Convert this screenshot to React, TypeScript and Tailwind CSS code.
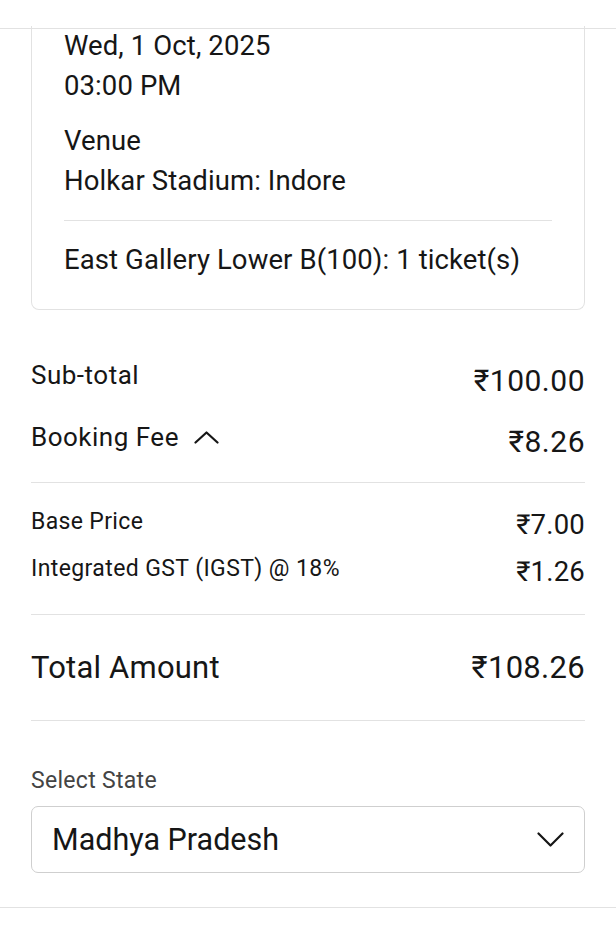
import React from "react";

function Row({ label, value, labelCls, valueCls, className }: { label: React.ReactNode; value: string; labelCls: string; valueCls: string; className?: string }) {
  return (
    <div className={"flex justify-between items-start " + (className ?? "")}>
      <div className={labelCls}>{label}</div>
      <div className={valueCls}>{value}</div>
    </div>
  );
}

export default function App() {
  return (
    <div className="w-[616px] h-[926px] bg-white overflow-hidden text-[#161616]" style={{ fontFamily: "Roboto, 'Noto Sans', sans-serif" }}>
      <div className="h-[29px] border-b border-[#e2e2e2]" />
      <div className="px-[31px]">
        <div className="border-x border-b border-[#e2e2e2] rounded-b-[8px] px-[32px] pb-[29px]">
          <div className="-mt-[3px] text-[27.5px] leading-[40px] tracking-[0.1px]">
            <p>Wed, 1 Oct, 2025</p>
            <p>03:00 PM</p>
            <p className="mt-[15px]">Venue</p>
            <p>Holkar Stadium: Indore</p>
          </div>
          <div className="mt-[19px] h-px bg-[#e2e2e2]" />
          <p className="mt-[19px] text-[27.5px] leading-[40px] tracking-[0.1px]">East Gallery Lower B(100): 1 ticket(s)</p>
        </div>

        <Row
          className="mt-[50px]"
          label="Sub-total"
          value="₹100.00"
          labelCls="text-[26px] leading-[30px] tracking-[0.5px]"
          valueCls="text-[30px] leading-[40px] pt-[1px] tracking-[0.5px]"
        />
        <Row
          className="mt-[21px]"
          label={
            <span className="flex items-center gap-[15px]">
              <span>Booking Fee</span>
              <svg width="25" height="13" viewBox="0 0 25 13" fill="none" stroke="#161616" strokeWidth="2.2" strokeLinecap="round" strokeLinejoin="round">
                <polyline points="1.5,11.5 12.5,1.5 23.5,11.5" />
              </svg>
            </span>
          }
          value="₹8.26"
          labelCls="text-[26px] leading-[30px] tracking-[0.5px]"
          valueCls="text-[30px] leading-[40px] tracking-[0.5px]"
        />
        <div className="mt-[20px] h-px bg-[#e2e2e2]" />
        <Row
          className="mt-[24px]"
          label="Base Price"
          value="₹7.00"
          labelCls="text-[23px] leading-[30px] tracking-[0.35px]"
          valueCls="text-[27.5px] leading-[36px] tracking-[0.2px]"
        />
        <Row
          className="mt-[11px]"
          label="Integrated GST (IGST) @ 18%"
          value="₹1.26"
          labelCls="text-[23px] leading-[30px] tracking-[0.4px]"
          valueCls="text-[27.5px] leading-[36px] tracking-[0.2px]"
        />
        <div className="mt-[24px] h-px bg-[#e2e2e2]" />
        <Row
          className="mt-[33px]"
          label="Total Amount"
          value="₹108.26"
          labelCls="text-[31px] leading-[40px] tracking-[0.2px]"
          valueCls="text-[31px] leading-[40px] tracking-[0.3px]"
        />
        <div className="mt-[32px] h-px bg-[#e2e2e2]" />
        <p className="mt-[45px] text-[23px] leading-[30px] tracking-[0.3px] text-[#444]">Select State</p>
        <div className="mt-[10px] h-[67px] border border-[#cfcfcf] rounded-[7px] flex items-center justify-between pl-[20px] pr-[20px]">
          <span className="text-[30.5px] leading-[40px]">Madhya Pradesh</span>
          <svg width="27" height="15" viewBox="0 0 27 15" fill="none" stroke="#161616" strokeWidth="2.2" strokeLinecap="round" strokeLinejoin="round">
            <polyline points="1.5,1.5 13.5,13.5 25.5,1.5" />
          </svg>
        </div>
      </div>
      <div className="mt-[34px] border-t border-[#e2e2e2]" />
    </div>
  );
}
